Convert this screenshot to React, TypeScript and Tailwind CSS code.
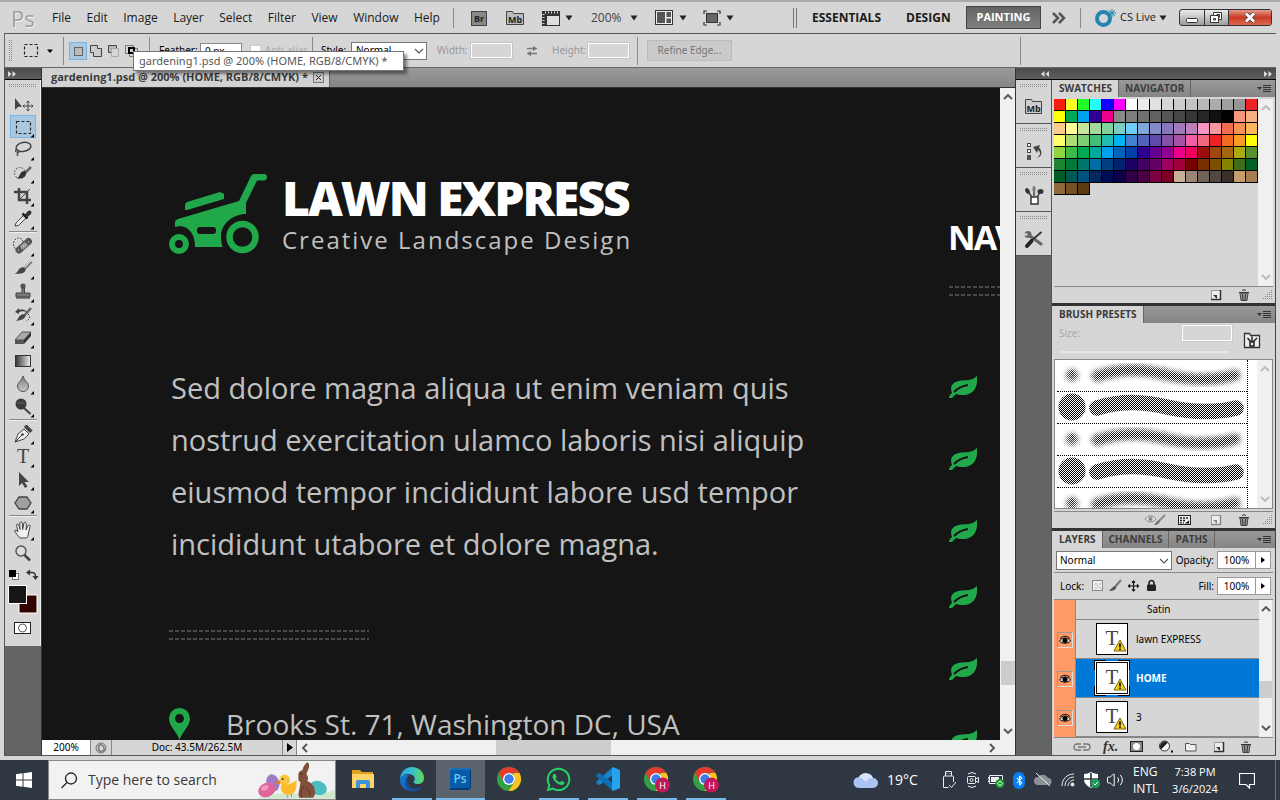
import React from "react";
import { FaWhatsapp } from "react-icons/fa";
import { Bluetooth, Volume2 } from "lucide-react";

const swatchRows = [
  "ff1b0b ffff27 1fff27 27ffff 1200ff ff00ff ffffff ebebeb e1e1e1 d7d7d7 cccccc c2c2c2 b7b7b7 acacac a0a0a0 959595 ed2226",
  "ffff0a 00aa55 00a0f0 2f0092 ed008c 898989 7d7d7d 707070 626262 555555 464646 363636 262626 111111 000000 f69679 f9b081",
  "fdcb8b fffe9b c5e69c a3da9b 84d09b 7bcec8 70cdf5 7ea6d8 8489c8 8878bb a17abc bc7fbd f494c1 f5979c f26c50 f79256 fcb75c",
  "ffff6b acdc75 7fcc77 42be7b 20bcb4 00b5f2 4480cb 5461bb 5f4aaa 8550a8 a653a5 f060a8 f1697e ed2226 f16c23 f99b24 ffff0a",
  "8fd43f 3cba4a 00aa50 00a99c 00a0ee 0063bb 003fa6 2f0092 640092 920090 ed008c ed0060 9c0d0e a04710 a46710 aaaa10 599030",
  "1b8533 007a36 00756b 006da5 004080 002270 1c0064 440063 630063 9f0060 9f003a 790000 7b3000 7d4f00 838400 406d1a 006226",
  "005d25 005a53 00527e 002960 000b55 0c0048 300046 4a0046 7b0044 7a0025 c7b299 998675 726358 534741 362f2b c69f6c a67f50",
  "8c683a 745025 5f3b13",
];
const swatches = swatchRows.flatMap((row) => row.split(" "));

function Caret({ className = "" }: { className?: string }) {
  return (
    <svg width="8" height="6" viewBox="0 0 8 6" className={`shrink-0 ${className}`}>
      <path d="M0.5 0.5h7L4 5.5z" fill="#222" />
    </svg>
  );
}

function Chevron({ dir, color = "#555", thin = false }: { dir: "up" | "down" | "left" | "right"; color?: string; thin?: boolean }) {
  const paths = {
    up: "M2 8l4-4 4 4",
    down: "M2 4l4 4 4-4",
    left: "M8 2L4 6l4 4",
    right: "M4 2l4 4-4 4",
  };
  return (
    <svg width="12" height="12" viewBox="0 0 12 12" className="shrink-0">
      <path d={paths[dir]} fill="none" stroke={color} strokeWidth={thin ? 1.1 : 1.9} />
    </svg>
  );
}

function Grip({ className = "" }: { className?: string }) {
  return (
    <svg width="28" height="4" viewBox="0 0 28 4" className={className}>
      <path d="M0 0.5h28M0 2.5h28" stroke="#8c8c8c" strokeDasharray="1 1" />
    </svg>
  );
}

/* ---------- Tool glyphs, drawn on a 24x22 box ---------- */

const toolGlyphs: Record<string, React.ReactNode> = {
  Move: (
    <>
      <path d="M4 5v12l3.2-3.2H11z" fill="#444" />
      <path d="M17 8v10M12 13h10M15.5 9.500L17 8l1.500 1.500M15.500 16.500L17 18l1.500-1.500M13.500 11.500L12 13l1.500 1.500M20.500 11.500L22 13l-1.500 1.500" stroke="#444" fill="none" />
    </>
  ),
  "Rectangular Marquee": <rect x="5.500" y="5.500" width="14" height="12" fill="none" stroke="#222" strokeWidth="1.200" strokeDasharray="3 2" />,
  Lasso: (
    <>
      <ellipse cx="12.500" cy="8" rx="7.500" ry="4.500" fill="none" stroke="#444" strokeWidth="1.500" transform="rotate(-10 12 8)" />
      <path d="M6 10c-2 1-2 3 0 3s3-1 1 1 0 2 0 3" fill="none" stroke="#444" strokeWidth="1.200" />
    </>
  ),
  "Quick Selection": (
    <>
      <circle cx="9" cy="11" r="5.500" fill="none" stroke="#333" strokeDasharray="1.500 1.500" />
      <path d="M20 5l-7 7" stroke="#666" strokeWidth="2.500" />
      <path d="M14.500 9.500c1.500 3-.5 6-3.500 6.500-2 .4-4 .5-5.500.2 2.500-.7 2.500-2 3.500-4s3.500-4 5.500-2.700z" fill="#333" />
    </>
  ),
  Crop: (
    <>
      <path d="M8 3v12h12M3 7h13v12" fill="none" stroke="#444" strokeWidth="2.500" />
      <path d="M8 15L19 4" stroke="#444" />
    </>
  ),
  Eyedropper: (
    <>
      <path d="M4 18l1-3 8-8 2.500 2.500-8 8z" fill="#eee" stroke="#444" />
      <path d="M11.500 5.500l5 5" stroke="#222" strokeWidth="2.500" />
      <path d="M13.500 7l3.500-4q2-1 3 0t0 3l-4 3.500z" fill="#333" />
    </>
  ),
  "Healing Brush": (
    <>
      <ellipse cx="7.500" cy="9" rx="5" ry="6" fill="none" stroke="#222" strokeDasharray="1.500 1.500" />
      <path d="M8 15L17.500 6.500" stroke="#555" strokeWidth="7" strokeLinecap="round" />
      <path d="M10.500 13l5-4.500" stroke="#999" strokeWidth="5" />
      <path d="M7 15h1M10 13h1M12 11h1M14 10h1M17 7h1" stroke="#ddd" />
    </>
  ),
  Brush: (
    <>
      <path d="M20.500 3.500L12 12" stroke="#777" strokeWidth="3" />
      <path d="M20 3l-8 8" stroke="#eee" />
      <path d="M14 10c1.500 2.500-.5 5-4 5.500-2.500.4-5 .5-6.500 0 2.500-.5 3-2 4-3.500 1.500-2.500 4.500-3.500 6.500-2z" fill="#444" />
    </>
  ),
  "Clone Stamp": (
    <>
      <circle cx="12" cy="5" r="2.600" fill="#555" />
      <path d="M11 7h2.500v5H19v4H5v-4h6z" fill="#777" stroke="#444" />
      <path d="M5 17h14" stroke="#333" />
    </>
  ),
  "History Brush": (
    <>
      <path d="M20 4l-7 8" stroke="#666" strokeWidth="2.500" />
      <path d="M14 11c1 3-2 5-9 6 2-2 2-3 3-4 1-2 4-4 6-2z" fill="#444" />
      <path d="M4 8l4-4v2c4-1 7 0 8 2-3-1-5-1-8 0v2z" fill="#444" />
      <path d="M17 10c3 2 2 6-2 7" fill="none" stroke="#333" strokeDasharray="1.500 1.500" />
    </>
  ),
  Eraser: (
    <>
      <path d="M4 13L11 5h9l-7 8z" fill="#aaa" stroke="#555" />
      <path d="M4 13h9v4H4z" fill="#555" />
      <path d="M13 13l7-8v4l-7 8z" fill="#333" />
    </>
  ),
  Gradient: <rect x="4.500" y="5.500" width="15" height="11" fill="url(#toolGradient)" stroke="#333" />,
  Blur: <path d="M12 3c1 5 5.500 6 5.500 10A5.500 5.500 0 0 1 12 18.500 5.500 5.500 0 0 1 6.500 13C6.500 9 11 8 12 3z" fill="url(#dropGradient)" stroke="#555" />,
  Burn: (
    <>
      <circle cx="10" cy="8" r="5.500" fill="#3a3a3a" />
      <path d="M6 7h8" stroke="#666" />
      <path d="M13 12l6.500 6" stroke="#444" strokeWidth="2" />
    </>
  ),
  Pen: (
    <>
      <path d="M4 19l3-8 6-5 5 5-5 5z" fill="#eee" stroke="#444" />
      <path d="M4.500 18.500L11 12" stroke="#333" />
      <circle cx="11.500" cy="11.500" r="1.200" fill="#333" />
      <path d="M13.500 4l2-2 5.500 5.500-2 2z" fill="#444" stroke="#333" />
    </>
  ),
  Type: (
    <text x="12" y="17" textAnchor="middle" fontSize="20" fill="#444" className="font-['Liberation_Serif',serif]">T</text>
  ),
  "Path Selection": <path d="M8 3v14l3-3 3 5 2.500-1.500-3-4.500H18z" fill="#444" />,
  "Custom Shape": <path d="M8 5h8l4 6-4 6H8l-4-6z" fill="#a0a0a0" stroke="#444" strokeWidth="1.300" />,
  Hand: (
    <path d="M9 19c-2-2-4-5-5.500-7 .5-1.500 2-1 3.500 1L5.500 6C6 4.500 7.500 5 8 6.500l1 4-.3-6.500c.6-1.500 2.300-1.500 2.600 0l.4 6.500L13 4c.7-1.300 2.300-1 2.300.5L15 11l2-4.500c1-1 2.400-.5 2 1L17.500 14c-.5 3-1 4-2 5z" fill="#f2f2f2" stroke="#444" />
  ),
  Zoom: (
    <>
      <circle cx="10" cy="9" r="5" fill="#ddd" stroke="#555" strokeWidth="1.500" />
      <path d="M13.500 13l5.500 5.500" stroke="#444" strokeWidth="2.500" />
    </>
  ),
};

const toolGroups = [
  ["Move", "Rectangular Marquee", "Lasso", "Quick Selection", "Crop", "Eyedropper"],
  ["Healing Brush", "Brush", "Clone Stamp", "History Brush", "Eraser", "Gradient", "Blur", "Burn"],
  ["Pen", "Type", "Path Selection", "Custom Shape"],
  ["Hand", "Zoom"],
];

function Tool({ name }: { name: string }) {
  const selected = name === "Rectangular Marquee";
  const flyout = name !== "Move" && name !== "Zoom";
  return (
    <button
      aria-label={name}
      className={`flex h-[23px] w-[26px] items-center justify-center border ${selected ? "border-[#76b5e8] bg-[#aac8e0]" : "border-transparent"}`}
    >
      <svg width="24" height="22" viewBox="0 0 24 22" className="shrink-0">
        {toolGlyphs[name]}
        {flyout && <path d="M23 18v3.500h-3.500z" fill="#000" />}
      </svg>
    </button>
  );
}

function ToolsPanel() {
  return (
    <aside className="flex w-9 shrink-0 flex-col bg-[#646464]">
      <div className="flex h-3 items-center border-b border-black bg-linear-to-b from-[#4c4c4c] to-[#5e5e5e] pl-[3px]">
        <DoubleArrow />
      </div>
      <div className="flex h-[566px] flex-col items-center border-r border-[#eee] bg-[#d6d6d6]">
        <Grip className="mt-1 mb-1 shrink-0" />
        {toolGroups.map((group, i) => (
          <React.Fragment key={group[0]}>
            {i > 0 && <div className="my-[1px] h-[2px] w-7 shrink-0 border-t border-b border-t-[#8a8a8a] border-b-[#eee]" />}
            {group.map((name) => (
              <Tool key={name} name={name} />
            ))}
          </React.Fragment>
        ))}
        <svg width="32" height="76" viewBox="0 0 32 76" className="shrink-0">
          <rect x="5.500" y="9.500" width="6" height="6" fill="#fff" stroke="#777" />
          <rect x="2" y="6" width="7" height="7" fill="#000" />
          <path d="M22 8.500h3c2 0 3.500 1.500 3.500 4" fill="none" stroke="#333" strokeWidth="1.400" />
          <path d="M19 8.500l4-3v6zM25.500 12h6l-3 4z" fill="#333" />
          <rect x="12" y="31" width="18" height="18" fill="#330000" stroke="#fff" />
          <rect x="1.500" y="21.500" width="18" height="18" fill="#161616" stroke="#fff" />
          <rect x="7.500" y="58.500" width="16" height="11" fill="#fff" stroke="#222" />
          <circle cx="15.500" cy="64" r="4" fill="#fff" stroke="#555" />
        </svg>
      </div>
    </aside>
  );
}

function DoubleArrow({ left = false }: { left?: boolean }) {
  return (
    <svg width="8" height="6" viewBox="0 0 8 6">
      <path d={left ? "M3.500 0L0 3l3.500 3zM8 0L4.500 3 8 6z" : "M0 0l3.500 3L0 6zM4.500 0L8 3 4.500 6z"} fill="#ddd" />
    </svg>
  );
}

/* ---------- Top bars ---------- */

const menus = ["File", "Edit", "Image", "Layer", "Select", "Filter", "View", "Window", "Help"];

function MenuBar() {
  return (
    <header className="flex h-8 shrink-0 items-center border-b border-[#555] bg-[#d6d6d6] font-['Open_Sans',sans-serif] text-xs text-[#1a1a1a]">
      <span className="w-12 shrink-0 pl-[7px] text-[22px] leading-none text-[#a0a0a0] [text-shadow:1px_1px_0_#f4f4f4]">Ps</span>
      <nav className="flex w-[388px] shrink-0 justify-between">
        {menus.map((m) => (
          <button key={m}>{m}</button>
        ))}
      </nav>
      <div className="ml-[13px] h-5 w-px shrink-0 bg-[#888]" />
      <svg width="90" height="20" viewBox="0 0 90 20" className="ml-[17px] shrink-0">
        <rect x="0.500" y="3.500" width="15" height="14" fill="#888" stroke="#444" />
        <text x="8" y="14" textAnchor="middle" fontSize="9" className="font-['Open_Sans',sans-serif] font-bold" fill="#222">Br</text>
        <path d="M35.500 3.500v13h17v-11h-10l-1-2z" fill="#bbb" stroke="#444" />
        <text x="44" y="14.500" textAnchor="middle" fontSize="9" className="font-['Open_Sans',sans-serif] font-bold" fill="#222">Mb</text>
        <path d="M71 3h18v15H71z" fill="#333" />
        <path d="M76 8h12v9H76z" fill="#ddd" />
        <path d="M74 4.500h14" stroke="#ddd" strokeDasharray="1 2" strokeWidth="2" />
        <path d="M72.500 6v12" stroke="#ddd" strokeDasharray="1 2" strokeWidth="2" />
      </svg>
      <Caret className="ml-[4px]" />
      <button className="ml-[18px] flex shrink-0 items-center gap-2 text-xs text-[#444]">
        200% <Caret />
      </button>
      <svg width="18" height="16" viewBox="0 0 18 16" className="ml-[17px] shrink-0">
        <rect x="0.500" y="0.500" width="17" height="14" fill="#eee" stroke="#333" />
        <path d="M2 2h8v11H2zM11.500 2H16v5h-4.500zM11.500 8.500H16V13h-4.500z" fill="#555" />
      </svg>
      <Caret className="ml-[6px]" />
      <svg width="18" height="16" viewBox="0 0 18 16" className="ml-4 shrink-0">
        <path d="M1 4V1h3M14 1h3v3M17 12v3h-3M4 15H1v-3" fill="none" stroke="#333" strokeWidth="1.200" />
        <rect x="3.500" y="3.500" width="11" height="9" fill="#666" stroke="#333" />
      </svg>
      <Caret className="ml-[5px]" />
      <div className="ml-auto flex shrink-0 items-center">
        <div className="mr-3.5 h-5 w-1 border-x border-[#777]" />
        <nav className="flex items-center text-xs font-bold">
          <button className="mr-6 w-[71px] whitespace-nowrap">ESSENTIALS</button>
          <button className="mr-4 w-11">DESIGN</button>
          <button className="h-[23px] w-[75px] border border-[#444] bg-linear-to-b from-[#646464] to-[#808080] text-[11px] text-white">PAINTING</button>
        </nav>
        <svg width="14" height="12" viewBox="0 0 14 12" className="ml-[11px]">
          <path d="M1 1l5 5-5 5M7 1l5 5-5 5" fill="none" stroke="#555" strokeWidth="2.500" />
        </svg>
        <div className="mx-[14px] h-5 w-px bg-[#888]" />
        <button className="flex w-[73px] items-center">
          <svg width="22" height="18" viewBox="0 0 22 18">
            <circle cx="8.500" cy="9.500" r="6.500" fill="none" stroke="#2685ac" strokeWidth="4" />
            <path d="M17 0v8M13 4h8M14 1l6 6M20 1l-6 6" stroke="#2685ac" />
          </svg>
          <span className="ml-[3px] text-[11px] whitespace-nowrap">CS Live</span>
          <Caret className="ml-[3px]" />
        </button>
        <svg width="93" height="18" viewBox="0 0 93 18" className="mr-1 ml-[11px]">
          <rect x="0.500" y="0.500" width="92" height="16" rx="2.500" fill="url(#chrome)" stroke="#333" />
          <path d="M50 1h40q2 0 2 2v11q0 2-2 2H50z" fill="url(#closeRed)" />
          <path d="M25.500 1v15M49.500 1v15" stroke="#333" />
          <rect x="7.500" y="9.500" width="11" height="4" rx="1" fill="#fff" stroke="#333" />
          <path d="M34.500 3.500h8v7h-3v3h-8v-7h3z" fill="#fff" stroke="#333" />
          <path d="M34.500 6.500h5v4M34.500 9.500h2v1.500h-2zM37.500 5.500h3v3" fill="none" stroke="#333" />
          <path d="M67 4.500l8 8M75 4.500l-8 8" stroke="#444" strokeWidth="4.500" />
          <path d="M67 4.500l8 8M75 4.500l-8 8" stroke="#fff" strokeWidth="2.700" />
        </svg>
      </div>
    </header>
  );
}

function OptionsBar() {
  const sep = "h-7 w-px shrink-0 bg-[#8a8a8a]";
  return (
    <div className="relative flex h-[34px] shrink-0 items-center border-b border-l border-[#666] bg-[#d6d6d6] font-['Noto_Sans',sans-serif] text-[10px]">
      <svg width="58" height="24" viewBox="0 0 58 24" className="shrink-0">
        <path d="M4.500 1v22M6.500 1v22" stroke="#8c8c8c" strokeDasharray="1 1" />
        <rect x="19.500" y="5.500" width="13" height="12" fill="none" stroke="#222" strokeWidth="1.200" strokeDasharray="3 2" />
        <path d="M42 10.500h6l-3 3.500z" fill="#000" />
      </svg>
      <div className={sep} />
      <svg width="80" height="20" viewBox="0 0 80 20" className="ml-[5px] shrink-0">
        <rect x="0.500" y="1.500" width="17" height="17" fill="#aac8e0" stroke="#76b5e8" />
        <rect x="5.500" y="6.500" width="8" height="8" fill="#bbb" stroke="#666" />
        <path d="M21.500 4.500h7v3h4v8h-8v-4h-3z" fill="#ccc" stroke="#444" />
        <path d="M39.500 4.500h8v3h-5v4h-3z" fill="#bbb" stroke="#444" />
        <path d="M42.500 7.500h7v8h-7z" fill="#d6d6d6" stroke="#aaa" />
        <path d="M56.500 4.500h8v8h-8zM60.500 7.500h8v8h-8z" fill="none" stroke="#777" />
        <rect x="60" y="7" width="5" height="5" fill="#ccc" stroke="#000" strokeWidth="2" />
      </svg>
      <div className={sep} />
      <label htmlFor="feather" className="ml-[9px] w-10 shrink-0">Feather:</label>
      <input id="feather" defaultValue="0 px" className="ml-px h-4 w-[42px] shrink-0 border border-[#888] bg-white px-1" />
      <label className="ml-2 flex w-[58px] shrink-0 items-center gap-1 whitespace-nowrap text-[#aaa]">
        <input type="checkbox" className="h-[11px] w-[11px] shrink-0 appearance-none border border-[#ccc] bg-white" />
        Anti-alias
      </label>
      <div className={`${sep} ml-1`} />
      <label htmlFor="style" className="ml-2 w-[30px] shrink-0">Style:</label>
      <div className="relative shrink-0">
        <select id="style" className="h-[18px] w-[76px] appearance-none border border-[#777] bg-white pl-1">
          <option>Normal</option>
        </select>
        <span className="pointer-events-none absolute top-[3px] right-0.5">
          <Chevron dir="down" thin />
        </span>
      </div>
      <label htmlFor="width" className="ml-2.5 w-[34px] shrink-0 text-[#999]">Width:</label>
      <input id="width" className="h-[15px] w-[41px] shrink-0 border border-white bg-[#d6d6d6] shadow-[0_0_0_1px_#c4c4c4]" />
      <svg width="12" height="12" viewBox="0 0 12 12" className="mx-3.5 shrink-0">
        <path d="M1 3.500h7M4 8.500h7" stroke="#777" strokeWidth="1.500" />
        <path d="M7 1l4.500 2.500L7 6zM5 6L.5 8.500 5 11z" fill="#777" />
      </svg>
      <label htmlFor="height" className="w-9 shrink-0 text-[#999]">Height:</label>
      <input id="height" className="h-[15px] w-[41px] shrink-0 border border-white bg-[#d6d6d6] shadow-[0_0_0_1px_#c4c4c4]" />
      <div className={`${sep} ml-2`} />
      <button className="ml-[9px] h-[21px] w-[85px] shrink-0 border border-[#bbb] bg-[#cacaca] whitespace-nowrap text-[#777]">Refine Edge...</button>
      <div className={`${sep} mr-[255px] ml-auto`} />
      <div role="tooltip" className="absolute top-[17px] left-[128px] z-10 flex h-5 w-[271px] items-center border border-[#767676] bg-white pl-[5px] text-[11px] whitespace-nowrap text-[#575757] shadow-[3px_3px_3px_rgba(0,0,0,0.45)]">
        gardening1.psd @ 200% (HOME, RGB/8/CMYK) *
      </div>
    </div>
  );
}

/* ---------- Document ---------- */

const body = "font-['Open_Sans',sans-serif] text-[#c0c0c0]";

function DoubleDash({ className = "" }: { className?: string }) {
  return (
    <svg width="200" height="10" viewBox="0 0 200 10" className={`shrink-0 ${className}`}>
      <path d="M0 1h200M0 9h200" stroke="#4a4a4a" strokeWidth="2" strokeDasharray="4 2" />
    </svg>
  );
}

function Leaf() {
  return (
    <svg width="28" height="22" viewBox="0 0 28 22" className="shrink-0">
      <path d="M28 0c1 9-2 18-12 19-4 .4-7-.5-9-1l-4 4H0c0-2 1-3 3-5C0 9 5 5 13 4.500 20 4 24 4 28 0z" fill="#20a84a" />
      <path d="M5 16c4-4 8-6 14-7" fill="none" stroke="#151515" strokeWidth="2" />
    </svg>
  );
}

function Canvas() {
  return (
    <main className="flex min-h-0 flex-1 overflow-hidden bg-[#151515]">
      <div className="flex w-[907px] shrink-0 flex-col pt-[86px] pl-[127px]">
        <div className="flex h-20">
          <svg width="100" height="82" viewBox="0 0 100 82" className="shrink-0">
            <g fill="#20a84a">
              <path d="M85 0h10q3 0 3 3t-3 3.500h-7L77 29v11C64 40 52 50 52 62c0 4 .500 8 1.500 11H26c0-12-5-20-15-21l-5 1v-5q0-2 3-3l61-18L82 2q1-2 3-2z" />
              <path d="M16 36v-5q0-2 2-3l33-10 4 2v5l-37 11z" />
            </g>
            <rect x="28" y="53" width="19" height="7" rx="3" fill="#151515" />
            <circle cx="73" cy="63" r="19.500" fill="#151515" />
            <circle cx="73.500" cy="63" r="13" fill="none" stroke="#20a84a" strokeWidth="6.500" />
            <circle cx="10" cy="70" r="7" fill="#151515" stroke="#20a84a" strokeWidth="6" />
          </svg>
          <div className="ml-[13px] whitespace-nowrap">
            <h1 className="font-['Open_Sans',sans-serif] text-[48px] leading-[48px] font-extrabold tracking-[-2px] text-white">LAWN EXPRESS</h1>
            <p className={`${body} text-2xl leading-9 tracking-[2px]`}>Creative Landscape Design</p>
          </div>
        </div>
        <p className={`${body} mt-[108px] ml-0.5 text-[29px] leading-[52px] whitespace-nowrap`}>
          Sed dolore magna aliqua ut enim veniam quis
          <br />
          nostrud exercitation ulamco laboris nisi aliquip
          <br />
          eiusmod tempor incididunt labore usd tempor
          <br />
          incididunt utabore et dolore magna.
        </p>
        <DoubleDash className="mt-[60px]" />
        <div className="mt-[62px] flex h-11 shrink-0 items-center">
          <svg width="22" height="32" viewBox="0 0 22 32" className="shrink-0">
            <path d="M10.500 0A10.500 10.500 0 0 1 21 10.500C21 18 13 24 10.500 32 8 24 0 18 0 10.500A10.500 10.500 0 0 1 10.500 0zm0 6a4.500 4.500 0 1 0 0 9 4.500 4.500 0 0 0 0-9z" fill="#20a84a" />
          </svg>
          <p className={`${body} ml-[35px] text-[28px] whitespace-nowrap`}>Brooks St. 71, Washington DC, USA</p>
        </div>
      </div>
      <div className="flex shrink-0 flex-col pt-[129px]">
        <h2 className="-ml-px font-['Open_Sans',sans-serif] text-[34px] leading-10 font-bold tracking-[-2px] text-white">NAV</h2>
        <DoubleDash className="mt-[29px]" />
        <div className="mt-20 flex flex-col gap-11">
          {[0, 1].map((group) => (
            <div key={group} className="flex flex-col gap-[50px]">
              <Leaf />
              <Leaf />
              <Leaf />
            </div>
          ))}
        </div>
      </div>
    </main>
  );
}

function DocumentArea() {
  return (
    <section className="flex min-w-0 flex-1 flex-col border-r border-l border-[#333]">
      <div className="flex h-5 shrink-0 items-stretch border-b border-[#333] bg-linear-to-b from-[#9a9a9a] to-[#868686]">
        <div className="flex w-[288px] items-center border-r border-[#666] bg-[#d2d2d2] pl-[9px] font-['Open_Sans',sans-serif] text-[11px] font-bold text-[#3a3a3a]">
          <span className="whitespace-nowrap">gardening1.psd @ 200% (HOME, RGB/8/CMYK) *</span>
          <button aria-label="Close document" className="mr-[5px] ml-auto">
            <svg width="11" height="11" viewBox="0 0 11 11">
              <rect x="0.500" y="0.500" width="10" height="10" fill="#ccc" stroke="#777" />
              <path d="M3 3l5 5M8 3L3 8" stroke="#333" />
            </svg>
          </button>
        </div>
      </div>
      <div className="flex min-h-0 flex-1">
        <Canvas />
        <div className="flex w-[15px] shrink-0 flex-col items-center bg-[#f0f0f0] py-[3px]">
          <Chevron dir="up" />
          <div className="mt-auto mb-10 h-6 w-3.5 bg-[#cdcdcd]" />
          <Chevron dir="down" />
        </div>
      </div>
      <div className="flex h-[15px] shrink-0 items-stretch bg-[#f0f0f0] font-['Noto_Sans',sans-serif] text-[10px] leading-[15px]">
        <input aria-label="Zoom level" defaultValue="200%" className="w-12 bg-white text-center" />
        <div className="flex w-[22px] items-center justify-center border-x border-[#888] bg-[#d6d6d6]">
          <svg width="12" height="12" viewBox="0 0 12 12">
            <circle cx="6" cy="6" r="5" fill="#bbb" stroke="#777" />
            <path d="M4 3h3l2 3v3H4z" fill="#ddd" stroke="#555" />
          </svg>
        </div>
        <div className="w-[170px] bg-[#d6d6d6] text-center">Doc: 43.5M/262.5M</div>
        <button aria-label="Status options" className="flex w-[15px] items-center justify-center border-x border-[#888] bg-[#d6d6d6]">
          <svg width="6" height="9" viewBox="0 0 6 9"><path d="M0 0l6 4.500L0 9z" /></svg>
        </button>
        <div className="flex flex-1 items-center pl-0.5">
          <Chevron dir="left" />
          <div className="ml-[185px] h-full w-[115px] bg-[#cdcdcd]" />
          <div className="mr-[17px] ml-auto">
            <Chevron dir="right" />
          </div>
        </div>
      </div>
    </section>
  );
}

/* ---------- Right-hand dock ---------- */

const dockGlyphs: [string, React.ReactNode][] = [
  [
    "Mini Bridge",
    <>
      <path d="M3.500 3.500v14h16v-12h-9l-1-2z" fill="#ccc" stroke="#444" />
      <text x="11.500" y="15.500" textAnchor="middle" fontSize="9" className="font-['Open_Sans',sans-serif] font-bold" fill="#222">Mb</text>
    </>,
  ],
  [
    "History",
    <>
      <rect x="5.500" y="3.500" width="3" height="3" fill="#fff" stroke="#444" />
      <rect x="5.500" y="9.500" width="3" height="3" fill="#fff" stroke="#444" />
      <rect x="5" y="15" width="4" height="5" fill="#555" />
      <path d="M14 18c5-2 5-6 2-8l-1 3-4-6 7-2-1 2.500c4 4 3 10-3 10.500z" fill="#444" />
    </>,
  ],
  [
    "Brush",
    <>
      <rect x="9" y="13" width="7" height="7" fill="#fff" stroke="#333" strokeWidth="1.500" />
      <path d="M10 13L5 6M12 13V4M15 13l4-6" stroke="#444" strokeWidth="1.500" />
      <ellipse cx="5.500" cy="7" rx="2" ry="3" transform="rotate(-30 5.500 7)" fill="#333" />
      <ellipse cx="12" cy="5" rx="1.500" ry="3" fill="#777" />
      <ellipse cx="18.500" cy="7.500" rx="3" ry="2.500" fill="#333" />
    </>,
  ],
  [
    "Tool Presets",
    <>
      <path d="M6 6.500L19 16" stroke="#666" strokeWidth="3" strokeLinecap="round" />
      <circle cx="6" cy="6.500" r="3.500" fill="#666" />
      <path d="M2 6.500l3.500 0" stroke="#d6d6d6" strokeWidth="2.200" />
      <path d="M19.500 4L9 13" stroke="#333" strokeWidth="1.700" />
      <path d="M9.500 13l-4.500 5" stroke="#222" strokeWidth="4" strokeLinecap="round" />
    </>,
  ],
];

function IconDock() {
  return (
    <div className="w-9 shrink-0 border-r border-[#555] bg-[#646464]">
      {dockGlyphs.map(([name, glyph]) => (
        <div key={name} className="flex h-11 flex-col items-center border-b border-[#555] bg-[#d6d6d6]">
          <Grip className="mt-1" />
          <button aria-label={name} className="mt-2">
            <svg width="24" height="22" viewBox="0 0 24 22">{glyph}</svg>
          </button>
        </div>
      ))}
    </div>
  );
}

function PanelTabs({ tabs }: { tabs: string[] }) {
  return (
    <div role="tablist" className="flex h-[17px] shrink-0 items-stretch bg-linear-to-b from-[#999] to-[#858585] font-['Open_Sans',sans-serif] text-[10px] leading-[17px] font-bold">
      {tabs.map((t, i) => (
        <button key={t} role="tab" aria-selected={i === 0} className={`border-r border-[#666] px-1.5 whitespace-nowrap ${i === 0 ? "bg-[#d6d6d6] pl-[7px] text-[#3a3a3a]" : "text-[#3c3c3c]"}`}>
          {t}
        </button>
      ))}
      <svg width="15" height="9" viewBox="0 0 15 9" className="mt-1 mr-[3px] ml-auto">
        <path d="M0 3h5L2.500 6z" fill="#333" />
        <path d="M6 1.500h8M6 3.500h8M6 5.500h8M6 7.500h8" stroke="#333" />
      </svg>
    </div>
  );
}

function PageIcon({ muted = false }: { muted?: boolean }) {
  const ink = muted ? "#888" : "#333";
  return (
    <svg width="12" height="12" viewBox="0 0 12 12">
      <path d="M1.500 1.500h9v9h-9z" fill="#eee" stroke="#999" />
      <path d="M10.500 1v10M1 10.500h10" stroke={ink} strokeWidth="1.500" />
      <path d="M3 6h4v4z" fill={ink} />
    </svg>
  );
}

function TrashIcon() {
  return (
    <svg width="12" height="12" viewBox="0 0 12 12">
      <path d="M2 4l1 7.500h6L10 4z" fill="#999" stroke="#444" />
      <path d="M1 3.500h10M4 1.500q2-1.500 4 0M4.500 5l.5 6M7.500 5L7 11" fill="none" stroke="#333" />
    </svg>
  );
}

function ResizeGrip() {
  return (
    <svg width="10" height="10" viewBox="0 0 10 10" className="-ml-[3px]">
      <path d="M8.500 0v10M6.500 2v8M4.500 4v6M2.500 6v4M.5 8v2" stroke="#888" strokeDasharray="1 1" />
    </svg>
  );
}

function SwatchesPanel() {
  return (
    <section className="flex h-[223px] shrink-0 flex-col bg-[#d6d6d6]">
      <PanelTabs tabs={["SWATCHES", "NAVIGATOR"]} />
      <div className="mx-0.5 mt-0.5 flex h-[188px] justify-between border-b border-[#888]">
        <div className="flex w-[204px] flex-wrap content-start">
          {swatches.map((c, i) => (
            <button key={i} aria-label={`Swatch #${c}`} className="h-3 w-3 border-r border-b border-black" style={{ backgroundColor: `#${c}` }} />
          ))}
        </div>
        <div className="flex w-[15px] flex-col items-center justify-between bg-[#f0f0f0] py-[3px]">
          <Chevron dir="up" color="#bbb" />
          <Chevron dir="down" color="#bbb" />
        </div>
      </div>
      <div className="flex flex-1 items-center justify-end gap-4 pr-0.5">
        <PageIcon />
        <TrashIcon />
        <ResizeGrip />
      </div>
    </section>
  );
}

function BrushRow({ soft }: { soft: boolean }) {
  const shape = soft ? (
    <g filter="url(#softEdge)">
      <circle cx="15" cy="15" r="6" fill="#fff" />
      <path d="M40 16C70 6 92 11 110 15S155 22 178 15" fill="none" stroke="#fff" strokeWidth="11" strokeLinecap="round" />
    </g>
  ) : (
    <g>
      <circle cx="15" cy="15" r="13.500" fill="#fff" />
      <path d="M40 16C70 7 92 11 110 15S155 22 179 16" fill="none" stroke="#fff" strokeWidth="15.500" strokeLinecap="round" />
    </g>
  );
  const id = soft ? "softMask" : "hardMask";
  return (
    <div className="h-8 shrink-0 border-b border-dotted border-black">
      <svg width="190" height="31" viewBox="0 0 190 31">
        <mask id={id} maskUnits="userSpaceOnUse" x="0" y="0" width="190" height="31">
          {shape}
        </mask>
        <rect width="190" height="31" fill="url(#dither)" mask={`url(#${id})`} />
      </svg>
    </div>
  );
}

function BrushPanel() {
  return (
    <section className="flex h-[222px] shrink-0 flex-col bg-[#d6d6d6]">
      <PanelTabs tabs={["BRUSH PRESETS"]} />
      <div className="flex h-9 shrink-0 justify-between pr-3.5 pl-[7px] font-['Noto_Sans',sans-serif] text-[10px] text-[#aaa]">
        <div className="w-[173px]">
          <div className="flex items-center justify-between pt-0.5">
            <label htmlFor="brushSize">Size:</label>
            <input id="brushSize" className="h-4 w-[50px] border border-white bg-[#d6d6d6] shadow-[0_0_0_1px_#ccc]" />
          </div>
          <div className="mt-[10px] ml-0.5 h-0.5 w-[168px] bg-[#e4e9e8]" />
        </div>
        <svg width="18" height="18" viewBox="0 0 18 18" className="mt-2">
          <path d="M1.500 2.500h5l1 2h9v12h-15z" fill="#eee" stroke="#333" strokeWidth="1.300" />
          <path d="M8 11L4.500 7M9 11V5.500M10 11l4-4M7 11h4v4H7z" fill="none" stroke="#222" strokeWidth="1.500" />
        </svg>
      </div>
      <div className="mx-0.5 flex h-[150px] shrink-0 justify-between overflow-hidden border border-[#888] bg-white pl-0.5">
        <div className="w-[191px] border-r border-dotted border-black">
          {[true, false, true, false, true].map((soft, i) => (
            <BrushRow key={i} soft={soft} />
          ))}
        </div>
        <div className="flex w-[15px] flex-col items-center justify-between bg-[#f0f0f0] py-[3px]">
          <Chevron dir="up" color="#bbb" />
          <Chevron dir="down" color="#bbb" />
        </div>
      </div>
      <div className="mx-0.5 mt-[2px] flex flex-1 items-center justify-end gap-4 border-t border-[#888]">
        <svg width="22" height="12" viewBox="0 0 22 12">
          <path d="M1 5c3-4 8-4 11 0-3 4-8 4-11 0z" fill="#ddd" stroke="#888" />
          <circle cx="6.500" cy="5" r="2" fill="#888" />
          <path d="M21 1l-6 6" stroke="#888" strokeWidth="2" />
          <path d="M16 6c0 4-3 5-6 5 2-3 3-5 6-5z" fill="#777" />
        </svg>
        <svg width="13" height="12" viewBox="0 0 13 12" className="-ml-1">
          <rect x="0.500" y="1.500" width="12" height="9" fill="#eee" stroke="#222" />
          <path d="M2 4h9M2 6.500h5M2 8.800h4" stroke="#222" strokeWidth="1.300" strokeDasharray="2 1" />
          <path d="M7 9.500h4v-3z" />
        </svg>
        <span className="ml-[3px]"><PageIcon muted /></span>
        <TrashIcon />
        <ResizeGrip />
      </div>
    </section>
  );
}

function LayerThumb({ active = false }: { active?: boolean }) {
  return (
    <svg width="36" height="36" viewBox="0 0 36 36" className="shrink-0">
      {active && (
        <>
          <rect x="0" y="0" width="36" height="36" fill="#000" />
          <path d="M12 0h12v1H12zM12 35h12v1H12zM0 10h1v16H0zM35 10h1v16h-1z" fill="#0078d7" />
          <rect x="1" y="1" width="34" height="34" fill="#fff" />
        </>
      )}
      <rect x="2.500" y="2.500" width="31" height="31" fill="#fff" stroke="#000" />
      <text x="18" y="24" textAnchor="middle" fontSize="21" fill="#444" className="font-['Liberation_Serif',serif] font-normal">T</text>
      <path d="M26 19l6 11H20z" fill="#f0cf1c" stroke="#7a6510" strokeLinejoin="round" />
      <path d="M26 22.500v4M26 27.500v1.500" stroke="#000" strokeWidth="1.600" />
    </svg>
  );
}

function Eye() {
  return (
    <button aria-label="Toggle visibility" className="flex h-4 w-4 items-center justify-center border border-t-[#999] border-r-[#ddd] border-b-[#ddd] border-l-[#999]">
      <svg width="12" height="10" viewBox="0 0 12 10">
        <path d="M0.500 6C3 2 9 2 11.500 6 9 9 3 9 .5 6z" fill="#ddd" stroke="#111" />
        <circle cx="6" cy="5.500" r="2.500" fill="#000" />
        <path d="M1 3.500C4 .5 8 .5 11 3.500" fill="none" stroke="#111" />
      </svg>
    </button>
  );
}

function PercentField({ id, label }: { id: string; label: string }) {
  return (
    <>
      <label htmlFor={id} className="ml-auto">{label}</label>
      <div className="ml-[3px] flex h-[18px] w-[54px] shrink-0 border border-[#999] bg-white">
        <input id={id} defaultValue="100%" className="w-[37px] min-w-0 text-center" />
        <button aria-label={`${label} slider`} className="flex w-[15px] items-center justify-center border-l border-[#999]">
          <svg width="4" height="6" viewBox="0 0 4 6"><path d="M0 0l4 3-4 3z" /></svg>
        </button>
      </div>
    </>
  );
}

const layers = [
  { name: "lawn EXPRESS", active: false },
  { name: "HOME", active: true },
  { name: "3", active: false },
];

function LayersPanel() {
  return (
    <section className="flex min-h-0 flex-1 flex-col bg-[#d6d6d6] font-['Noto_Sans',sans-serif] text-[10px]">
      <PanelTabs tabs={["LAYERS", "CHANNELS", "PATHS"]} />
      <div className="mx-0.5 flex h-[25px] shrink-0 items-center border-b border-[#888] pr-0.5 pl-0.5">
        <div className="relative">
          <select aria-label="Blend mode" className="h-[19px] w-[116px] appearance-none border border-[#777] bg-white pl-[3px]">
            <option>Normal</option>
          </select>
          <span className="pointer-events-none absolute top-1 right-0.5">
            <Chevron dir="down" thin />
          </span>
        </div>
        <PercentField id="opacity" label="Opacity:" />
      </div>
      <div className="mx-0.5 flex h-[27px] shrink-0 items-center border-b border-[#888] pr-0.5 pl-1.5">
        Lock:
        <svg width="66" height="14" viewBox="0 0 66 14" className="ml-[7px]">
          <rect x="1.500" y="1.500" width="10" height="10" fill="#eee" stroke="#888" />
          <path d="M4 4h2v2H4zM8 4h2v2H8zM6 6h2v2H6zM4 8h2v2H4zM8 8h2v2H8z" fill="#ccc" />
          <path d="M30 1l-7 8" stroke="#777" strokeWidth="2" />
          <path d="M25 7c1 4-3 5-7 5 2-2 4-5 7-5z" fill="#555" />
          <path d="M42.500 2v10M37.500 7h10M41 3.500L42.500 2 44 3.500M41 10.500l1.500 1.500 1.500-1.500M39 5.500L37.500 7 39 8.500M46 5.500L47.500 7 46 8.500" fill="none" stroke="#111" strokeWidth="1.200" />
          <path d="M58 6V4.500a2.500 3 0 0 1 5 0V6" fill="none" stroke="#222" strokeWidth="1.600" />
          <rect x="56" y="5.500" width="9" height="6.500" rx="1" fill="#222" />
        </svg>
        <PercentField id="fill" label="Fill:" />
      </div>
      <div className="mx-0.5 flex h-[138px] shrink-0 border-b border-[#888]">
        <div className="flex w-[205px] flex-col">
          <div className="flex h-5 shrink-0">
            <div className="w-[22px] shrink-0 border-r border-[#888] bg-[#ff9966]" />
            <div className="flex-1 border-b border-[#888] pl-[71px] leading-[18px]">Satin</div>
          </div>
          {layers.map((l) => (
            <div key={l.name} className="flex h-[39px] shrink-0">
              <div className="flex w-[22px] shrink-0 items-center justify-center border-r border-[#888] bg-[#ff9966]">
                <Eye />
              </div>
              <div className={`flex flex-1 items-center border-b border-[#888] pl-[18px] ${l.active ? "bg-[#0078d7] font-bold text-white" : "text-black"}`}>
                <LayerThumb active={l.active} />
                <span className="ml-1.5">{l.name}</span>
              </div>
            </div>
          ))}
        </div>
        <div className="flex w-[13px] flex-col items-center bg-[#f0f0f0] py-[3px]">
          <Chevron dir="up" />
          <div className="mt-auto mb-6 h-[17px] w-full bg-[#cdcdcd]" />
          <Chevron dir="down" />
        </div>
      </div>
      <div className="flex flex-1 items-center pl-[21px]">
        <svg width="18" height="10" viewBox="0 0 18 10">
          <path d="M8 2H4a3 3 0 0 0 0 6h4M10 2h4a3 3 0 0 1 0 6h-4M5 5h8" fill="none" stroke="#777" strokeWidth="1.300" />
        </svg>
        <span className="ml-3 w-[17px] font-['Liberation_Serif',serif] text-sm leading-none font-bold text-[#333] italic">fx.</span>
        <svg width="14" height="12" viewBox="0 0 14 12" className="ml-2.5">
          <rect x="0.500" y="0.500" width="12" height="10" fill="#888" stroke="#222" />
          <circle cx="6.500" cy="5.500" r="3.500" fill="#fff" />
        </svg>
        <svg width="18" height="13" viewBox="0 0 18 13" className="ml-3.5">
          <circle cx="6.500" cy="6" r="5" fill="#fff" stroke="#333" />
          <path d="M3 9.500A5 5 0 0 1 10 2.500z" fill="#222" />
          <path d="M13 10.500h2v2h-2z" />
        </svg>
        <svg width="12" height="10" viewBox="0 0 12 10" className="ml-[9px]">
          <path d="M0.500 1.500h4l1 1h5.500v6.500H.5z" fill="#eee" stroke="#555" />
        </svg>
        <span className="ml-4"><PageIcon /></span>
        <span className="ml-[15px]"><TrashIcon /></span>
      </div>
    </section>
  );
}

function Dock() {
  return (
    <aside className="flex w-[260px] shrink-0 flex-col">
      <div className="flex h-3 shrink-0 items-center justify-between border-b border-black bg-linear-to-b from-[#4c4c4c] to-[#5e5e5e] pr-1 pl-[25px]">
        <DoubleArrow left />
        <DoubleArrow />
      </div>
      <div className="flex min-h-0 flex-1">
        <IconDock />
        <div className="flex min-w-0 flex-1 flex-col gap-[3px] border-r border-[#444] bg-[#333]">
          <SwatchesPanel />
          <BrushPanel />
          <LayersPanel />
        </div>
      </div>
    </aside>
  );
}

/* ---------- Taskbar ---------- */

function ChromeLogo({ badge = false }: { badge?: boolean }) {
  return (
    <svg width="28" height="28" viewBox="0 0 28 28">
      <circle cx="13" cy="14" r="12" fill="#34a045" />
      <path d="M2.600 8A12 12 0 0 1 23.400 8H13L8 17z" fill="#e33b2e" />
      <path d="M23.400 8A12 12 0 0 1 12.500 26l6-9-1-9z" fill="#fcc31e" />
      <circle cx="13" cy="14" r="6" fill="#fff" />
      <circle cx="13" cy="14" r="4.700" fill="#3b7ded" />
      {badge && (
        <>
          <circle cx="19.500" cy="20" r="7.500" fill="#c2185b" />
          <text x="19.500" y="23.500" textAnchor="middle" fontSize="9" fill="#fff" className="font-['Open_Sans',sans-serif]">H</text>
        </>
      )}
    </svg>
  );
}

const taskItems: { name: string; state: "idle" | "open" | "active"; icon: React.ReactNode }[] = [
  {
    name: "File Explorer",
    state: "idle",
    icon: (
      <svg width="22" height="20" viewBox="0 0 22 20">
        <path d="M0 1h8l2 2h11v5H0z" fill="#dfa11d" />
        <path d="M0 5h22v14H0z" fill="#fbd667" />
        <path d="M4 19v-6q0-2 2-2h10q2 0 2 2v6h-4v-4H8v4z" fill="#3b93dc" />
      </svg>
    ),
  },
  {
    name: "Edge",
    state: "open",
    icon: (
      <svg width="26" height="26" viewBox="0 0 26 26">
        <defs>
          <linearGradient id="edgeTop"><stop stopColor="#2aa6e0" /><stop offset="0.500" stopColor="#35c1cc" /><stop offset="1" stopColor="#62d957" /></linearGradient>
        </defs>
        <path d="M1 14C1 8 6 8.500 10 9c-3 3-3 8 0 12 2 2.500 6 3.500 12 .5C19 25 15 25.500 12 25 6 24.500 1 20 1 14z" fill="#1673c8" />
        <path d="M9 10c-2 4-1 9 3 12 3 1.500 7 1 11-2-3 5-8 6-12 5-6-2-7-9-2-15z" fill="#14539c" />
        <path d="M1 13C1.500 5 7 1 13 1c7 0 12 5 12 11 0 4-3 6-6 6-4 0-5-1.500-4-3 2-3 0-7-6-7-4 0-7 2-8 5z" fill="url(#edgeTop)" />
      </svg>
    ),
  },
  {
    name: "Photoshop",
    state: "active",
    icon: (
      <svg width="24" height="24" viewBox="0 0 24 24">
        <path d="M1 3l2-2h19v20l-2 2H1z" fill="#063b78" />
        <path d="M1 3h20v18H1z" fill="#075ba8" />
        <path d="M1 2h21" stroke="#25a5eb" />
        <text x="11" y="16" textAnchor="middle" fontSize="12" fill="#63cdf6" className="font-['Open_Sans',sans-serif] font-semibold">Ps</text>
      </svg>
    ),
  },
  { name: "Chrome", state: "idle", icon: <ChromeLogo /> },
  { name: "WhatsApp", state: "open", icon: <FaWhatsapp size={27} color="#25d366" /> },
  {
    name: "Visual Studio Code",
    state: "open",
    icon: (
      <svg width="26" height="26" viewBox="0 0 26 26">
        <path d="M18 1L1 16l2 3 3-1L19 8z" fill="#1a84c9" />
        <path d="M18 25L1 10l2-3 3 1 13 10z" fill="#0f6fb4" />
        <path d="M18 1l7 3v18l-7 3-1-2V3z" fill="#27a3ee" />
      </svg>
    ),
  },
  { name: "Chrome profile H", state: "open", icon: <ChromeLogo badge /> },
  { name: "Chrome profile H, second window", state: "open", icon: <ChromeLogo badge /> },
];

function SearchArt() {
  return (
    <svg width="80" height="37" viewBox="0 0 80 37">
      <path d="M0 37q20-7 42-5t38-4v9z" fill="#cfe6cf" />
      <ellipse cx="17" cy="21" rx="6.500" ry="9" fill="#9f7cc4" transform="rotate(-15 17 21)" />
      <ellipse cx="11" cy="28" rx="9" ry="7" fill="#e0659a" transform="rotate(-25 11 28)" />
      <ellipse cx="9" cy="26" rx="4" ry="2.500" fill="#f09abf" transform="rotate(-25 9 26)" />
      <ellipse cx="63" cy="26" rx="9" ry="7" fill="#49bfc0" transform="rotate(20 63 26)" />
      <circle cx="29" cy="18" r="5.500" fill="#ffc440" />
      <path d="M26 22q8 2 15-4 1 14-7 15-9 0-9-8z" fill="#ffb92e" />
      <path d="M24 19l-4 2 4 1zM32 33v3M36 32v3" fill="#ee7a20" stroke="#ee7a20" />
      <circle cx="27" cy="17" r="1" fill="#333" />
      <path d="M43 14q-1-5 4-6 1-5 5-8 3 1 1 7l-2 5q3 4 1 7 8 3 8 13l-2 4H44q-2-4 0-9l1-7q-3-1-2-6z" fill="#80503b" />
      <path d="M48 24q-4 5-2 12M55 34q0-6-4-8" stroke="#5e3525" fill="none" />
      <circle cx="46" cy="12" r="0.800" fill="#2c160c" />
    </svg>
  );
}

function Taskbar() {
  return (
    <footer className="flex h-10 shrink-0 items-stretch bg-[#2f3842] font-['Open_Sans',sans-serif] text-white">
      <button aria-label="Start" className="flex w-12 shrink-0 items-center justify-center">
        <svg width="16" height="16" viewBox="0 0 16 16">
          <path d="M0 2.300l6.500-1v6.200H0zM7.500 1.200L16 0v7.500H7.500zM0 8.500h6.500v6.200L0 13.700zM7.500 8.500H16V16l-8.500-1.200z" fill="#fff" />
        </svg>
      </button>
      <label className="flex w-[288px] shrink-0 items-center border border-[#888] bg-[#f2f2f2] pl-3 text-[#333]">
        <svg width="17" height="17" viewBox="0 0 17 17" className="shrink-0">
          <circle cx="10" cy="6.500" r="5.500" fill="none" stroke="#222" strokeWidth="1.300" />
          <path d="M6 10.500L0.500 16" stroke="#222" strokeWidth="1.300" />
        </svg>
        <input aria-label="Search" placeholder="Type here to search" className="ml-2.5 w-[168px] bg-transparent text-sm placeholder:text-[#3a3a3a]" />
        <SearchArt />
      </label>
      <div className="ml-0.5 flex shrink-0">
        {taskItems.map((t) => (
          <button key={t.name} aria-label={t.name} className={`flex w-[49px] flex-col items-center ${t.state === "active" ? "bg-[#5b646d]" : ""}`}>
            <span className="flex h-[38px] items-center">{t.icon}</span>
            {t.state !== "idle" && <span className={`h-0.5 bg-[#76b9ed] ${t.state === "active" ? "w-full" : "w-10"}`} />}
          </button>
        ))}
      </div>
      <div className="ml-auto flex shrink-0 items-center">
        <svg width="26" height="18" viewBox="0 0 26 18">
          <path d="M6 17a5.500 5.500 0 0 1 0-11 8 8 0 0 1 14 1 5 5 0 0 1 0 10z" fill="#a9c4f3" />
          <path d="M6 6a8 8 0 0 1 14 1q-5 0-7 4-4-4-7-5z" fill="#d8e5fb" />
        </svg>
        <span className="ml-2 w-[54px] text-sm">19°C</span>
        <svg width="16" height="18" viewBox="0 0 16 18" fill="none" stroke="#eee">
          <path d="M4.500 5V.5h6V5M2.500 16.500V6q0-1 1-1h8q1 0 1 1v5M2.500 16.500h5M6 2v1M9 2v1M8 14l2.500 2.500L15 11" />
        </svg>
        <svg width="16" height="18" viewBox="0 0 16 18" className="ml-2" fill="none" stroke="#eee">
          <rect x="2.500" y="5.500" width="8" height="7" rx="1" />
          <path d="M10.500 8l3-1.500v5l-3-1.500M3 3q4-3 8 0M3 15q4 3 8 0" />
          <circle cx="6.500" cy="9" r="1.500" />
        </svg>
        <svg width="18" height="18" viewBox="0 0 18 18" className="ml-[7px]">
          <path d="M1.500 4.500h13v8h-13zM0 6.500h1.500v4H0z" fill="none" stroke="#eee" />
          <path d="M3 6h8v5H3z" fill="#eee" />
          <circle cx="12" cy="12.500" r="4.500" fill="#169b2c" />
          <path d="M12 10l2.500 2.500L12 15l-2.500-2.500z" fill="none" stroke="#fff" />
        </svg>
        <span className="ml-[7px] flex h-[17px] w-3 items-center justify-center rounded-full bg-[#0a7df5]">
          <Bluetooth size={11} strokeWidth={2.200} />
        </span>
        <svg width="18" height="14" viewBox="0 0 18 14" className="ml-[9px]">
          <path d="M4 12a4 4 0 0 1 0-8 6 6 0 0 1 10 1 3.500 3.500 0 0 1 0 7z" fill="#8c9197" />
          <path d="M2 0l14 13" stroke="#eee" />
        </svg>
        <svg width="14" height="14" viewBox="0 0 14 14" className="ml-[9px]" fill="none" stroke="#eee">
          <path d="M1 13C1 6 6 1 13 1M4 13c0-5 4-9 9-9M7 13c0-3 3-6 6-6" />
          <circle cx="11.500" cy="11.500" r="1.500" fill="#eee" />
        </svg>
        <svg width="18" height="18" viewBox="0 0 18 18" className="ml-2">
          <path d="M8 1q3 2 7 2v5q0 6-7 9-7-3-7-9V3q4 0 7-2z" fill="#fff" />
          <path d="M8 2v14M1 8h14" stroke="#2f3842" strokeWidth="1.700" />
          <circle cx="12.500" cy="12.500" r="4.500" fill="#1d9b58" />
          <path d="M10.500 12.500l1.500 1.500 3-3" stroke="#fff" fill="none" />
        </svg>
        <Volume2 size={18} strokeWidth={1.300} className="ml-[5px]" />
        <div className="ml-[9px] w-6 text-xs leading-[17px]">
          <div>ENG</div>
          <div>INTL</div>
        </div>
        <div className="ml-[15px] flex w-[46px] flex-col items-center text-[11px] leading-[17px] whitespace-nowrap">
          <div>7:38 PM</div>
          <div>3/6/2024</div>
        </div>
        <button aria-label="Notifications" className="flex h-10 w-[57px] items-center justify-center">
          <svg width="16" height="17" viewBox="0 0 16 17">
            <path d="M0.500 1.500h15v11h-5v3.500l-3.500-3.500H.5z" fill="none" stroke="#fff" strokeWidth="1.200" />
          </svg>
        </button>
        <div className="h-full w-[5px] border-l border-[#69717a]" />
      </div>
    </footer>
  );
}

function SharedDefs() {
  return (
    <svg width="0" height="0" className="absolute" aria-hidden="true">
      <defs>
        <linearGradient id="toolGradient"><stop stopColor="#333" /><stop offset="1" stopColor="#eee" /></linearGradient>
        <linearGradient id="dropGradient" x2="0" y2="1"><stop stopColor="#777" /><stop offset="1" stopColor="#ccc" /></linearGradient>
        <linearGradient id="chrome" x2="0" y2="1"><stop stopColor="#eee" /><stop offset="1" stopColor="#999" /></linearGradient>
        <linearGradient id="closeRed" x2="0" y2="1"><stop stopColor="#e69a8c" /><stop offset="0.500" stopColor="#c83a25" /><stop offset="1" stopColor="#df6a50" /></linearGradient>
        <pattern id="dither" width="2" height="2" patternUnits="userSpaceOnUse">
          <path d="M0 0h1v1H0zM1 1h1v1H1z" fill="#000" />
        </pattern>
        <filter id="softEdge" x="-20%" y="-50%" width="140%" height="200%"><feGaussianBlur stdDeviation="2.500" /></filter>
      </defs>
    </svg>
  );
}

export default function App() {
  return (
    <div className="flex h-screen min-w-[1280px] flex-col overflow-hidden">
      <SharedDefs />
      <div className="flex min-h-0 flex-1 flex-col border-t-2 border-b-4 border-[#d6d6d6] border-t-[#aaa] bg-[#d6d6d6] px-1">
        <MenuBar />
        <OptionsBar />
        <div className="flex min-h-0 flex-1 border-b border-l border-[#555]">
          <ToolsPanel />
          <DocumentArea />
          <Dock />
        </div>
      </div>
      <Taskbar />
    </div>
  );
}
